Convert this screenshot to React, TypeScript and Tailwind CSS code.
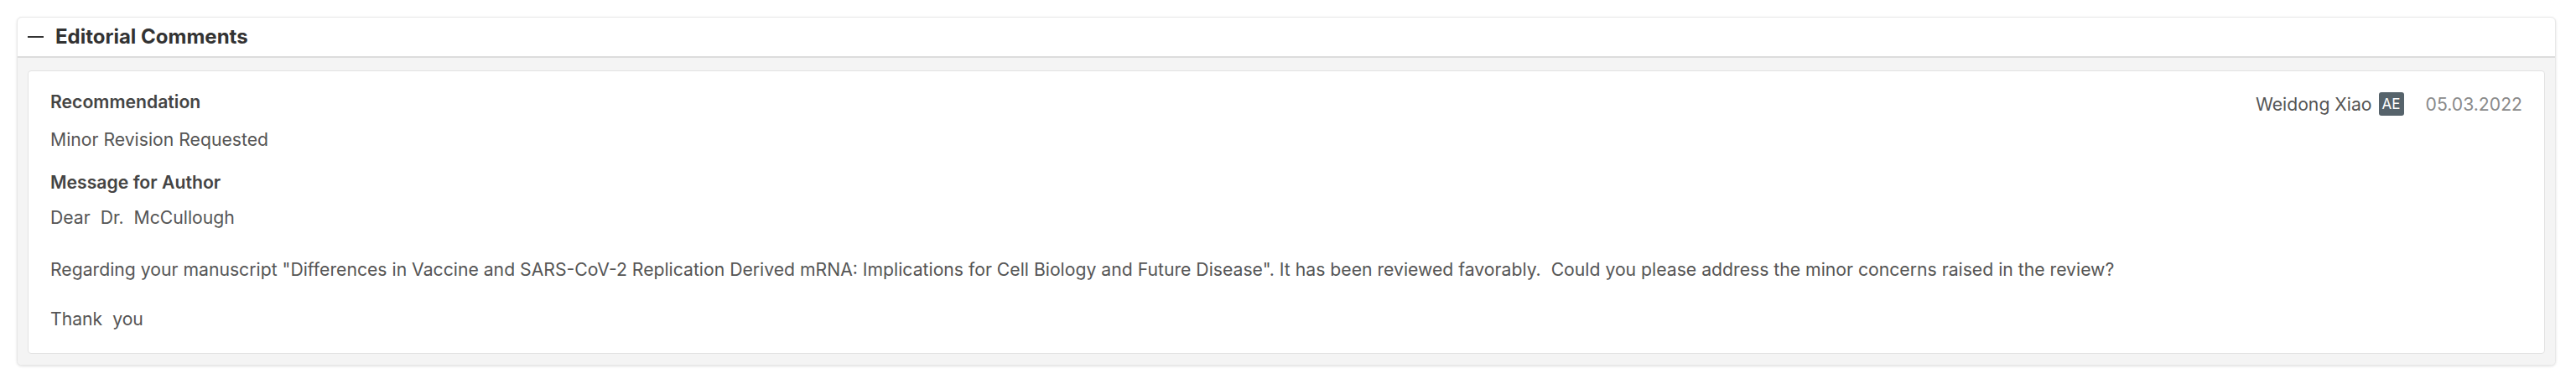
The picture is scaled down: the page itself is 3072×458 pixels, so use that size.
const message = [
  'Dear  Dr.  McCullough',
  'Regarding your manuscript "Differences in Vaccine and SARS-CoV-2 Replication Derived mRNA: Implications for Cell Biology and Future Disease". It has been reviewed favorably.  Could you please address the minor concerns raised in the review?',
  'Thank  you',
];

export default function App() {
  return (
    <div className="min-h-[458px] bg-white pt-[20px] pl-[20px] pr-[24px] font-['Inter',sans-serif]">
      <div className="overflow-hidden rounded-[6px] border border-[#e8e8e8] bg-white shadow-[0_1px_3px_rgba(0,0,0,0.12)]">
        {/* header */}
        <div className="flex h-[48px] items-center gap-[14px] border-b-2 border-[#dcdcdc] pl-[12px]">
          <span className="h-[2px] w-[19px] bg-[#333]" />
          <h2 className="text-[24px] font-bold leading-none text-[#333]">Editorial Comments</h2>
        </div>

        {/* body */}
        <div className="bg-[#f4f4f4] px-[12px] pt-[15px] pb-[13px]">
          <div className="rounded-[4px] border border-[#e2e2e2] bg-white px-[26px] pt-[20px] pb-[25px] text-[21.2px] leading-[32px] text-[#555]">
            <div className="flex items-start justify-between">
              <div className="font-semibold text-[#444]">Recommendation</div>
              <div className="mt-[3px] flex items-center">
                <span>Weidong Xiao</span>
                <span className="ml-[8px] flex h-[28px] w-[30px] items-center justify-center rounded-[3px] bg-[#56636b] text-[17px] leading-none text-white">
                  AE
                </span>
                <span className="ml-[26px] text-[#8a8a8a]">05.03.2022</span>
              </div>
            </div>
            <div className="mt-[10px]">Minor Revision Requested</div>

            <div className="mt-[19px] font-semibold text-[#444]">Message for Author</div>
            <div className="mt-[10px] whitespace-pre-wrap">{message[0]}</div>
            <div className="mt-[30px] whitespace-pre-wrap">{message[1]}</div>
            <div className="mt-[27px] whitespace-pre-wrap">{message[2]}</div>
          </div>
        </div>
      </div>
    </div>
  );
}
